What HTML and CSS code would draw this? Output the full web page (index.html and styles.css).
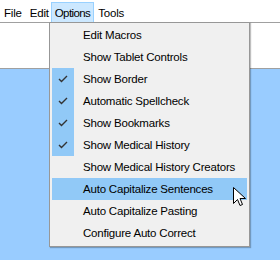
FILE: index.html
```html
<!DOCTYPE html>
<html>
<head>
	<meta charset="utf-8">
	<title>Options menu</title>
	<link rel="stylesheet" href="styles.css">
</head>
<body>
	<div class="menubar">
		<span class="top">File</span>
		<span class="top edit">Edit</span>
		<span class="top open">Options</span>
		<span class="top">Tools</span>
	</div>
	<div class="toolarea"></div>
	<div class="workspace"></div>

	<div class="dropdown">
		<div class="item"><span class="chk"></span>Edit Macros</div>
		<div class="item"><span class="chk"></span>Show Tablet Controls</div>
		<div class="item"><span class="chk on"><svg width="10" height="8" viewBox="0 0 10 8"><polyline points="1,4 3.5,6.5 9,1" fill="none" stroke="#333" stroke-width="1.4"/></svg></span>Show Border</div>
		<div class="item"><span class="chk on"><svg width="10" height="8" viewBox="0 0 10 8"><polyline points="1,4 3.5,6.5 9,1" fill="none" stroke="#333" stroke-width="1.4"/></svg></span>Automatic Spellcheck</div>
		<div class="item"><span class="chk on"><svg width="10" height="8" viewBox="0 0 10 8"><polyline points="1,4 3.5,6.5 9,1" fill="none" stroke="#333" stroke-width="1.4"/></svg></span>Show Bookmarks</div>
		<div class="item"><span class="chk on"><svg width="10" height="8" viewBox="0 0 10 8"><polyline points="1,4 3.5,6.5 9,1" fill="none" stroke="#333" stroke-width="1.4"/></svg></span>Show Medical History</div>
		<div class="item"><span class="chk"></span>Show Medical History Creators</div>
		<div class="item hover"><span class="chk"></span>Auto Capitalize Sentences</div>
		<div class="item"><span class="chk"></span>Auto Capitalize Pasting</div>
		<div class="item"><span class="chk"></span>Configure Auto Correct</div>
	</div>

	<svg class="cursor" width="13" height="20" viewBox="0 0 13 20">
		<path d="M0.5,0.5 L0.5,16.5 L4.5,12.5 L7,18.5 L9.5,17.5 L7,11.5 L12.5,11.5 Z" fill="#fff" stroke="#000" stroke-width="1"/>
	</svg>
</body>
</html>
```

FILE: styles.css
```css
body {
	margin: 0;
	background: #fff;
	font-family: "Liberation Sans", Arial, sans-serif;
	font-size: 11.5px;
	letter-spacing: -0.2px;
	color: #000;
	width: 280px;
	height: 260px;
	overflow: hidden;
}
.menubar {
	display: flex;
	align-items: flex-end;
	height: 22px;
	border-bottom: 1px solid #a0a0a0;
	background: #fff;
}
.top {
	display: flex;
	align-items: center;
	height: 20px;
	padding: 1px 3px 0 3px;
	border: 1px solid transparent;
	border-bottom: none;
	box-sizing: border-box;
}
.edit {
	margin-right: -2px;
}
.open {
	background: #cce8ff;
	border-color: #99d1ff;
	letter-spacing: -0.6px;
}
.toolarea {
	height: 45px;
	background: #fff;
}
.workspace {
	height: 192px;
	background: #99ccff;
	border-top: 1px solid #a0a0a0;
}
.dropdown {
	position: absolute;
	left: 49px;
	top: 22px;
	width: 195px;
	padding: 1px 2px 2px 2px;
	background: #f0f0f0;
	border: 1px solid #979797;
	box-shadow: 1px 1px 1px rgba(0, 0, 0, 0.25);
}
.item {
	display: flex;
	align-items: center;
	height: 22px;
	white-space: nowrap;
}
.item.hover {
	background: #91c9f7;
}
.chk {
	display: flex;
	align-items: center;
	justify-content: center;
	width: 22px;
	height: 22px;
	margin-right: 9px;
}
.chk.on {
	background: #91c9f7;
}
.cursor {
	position: absolute;
	left: 233px;
	top: 187px;
}
```
